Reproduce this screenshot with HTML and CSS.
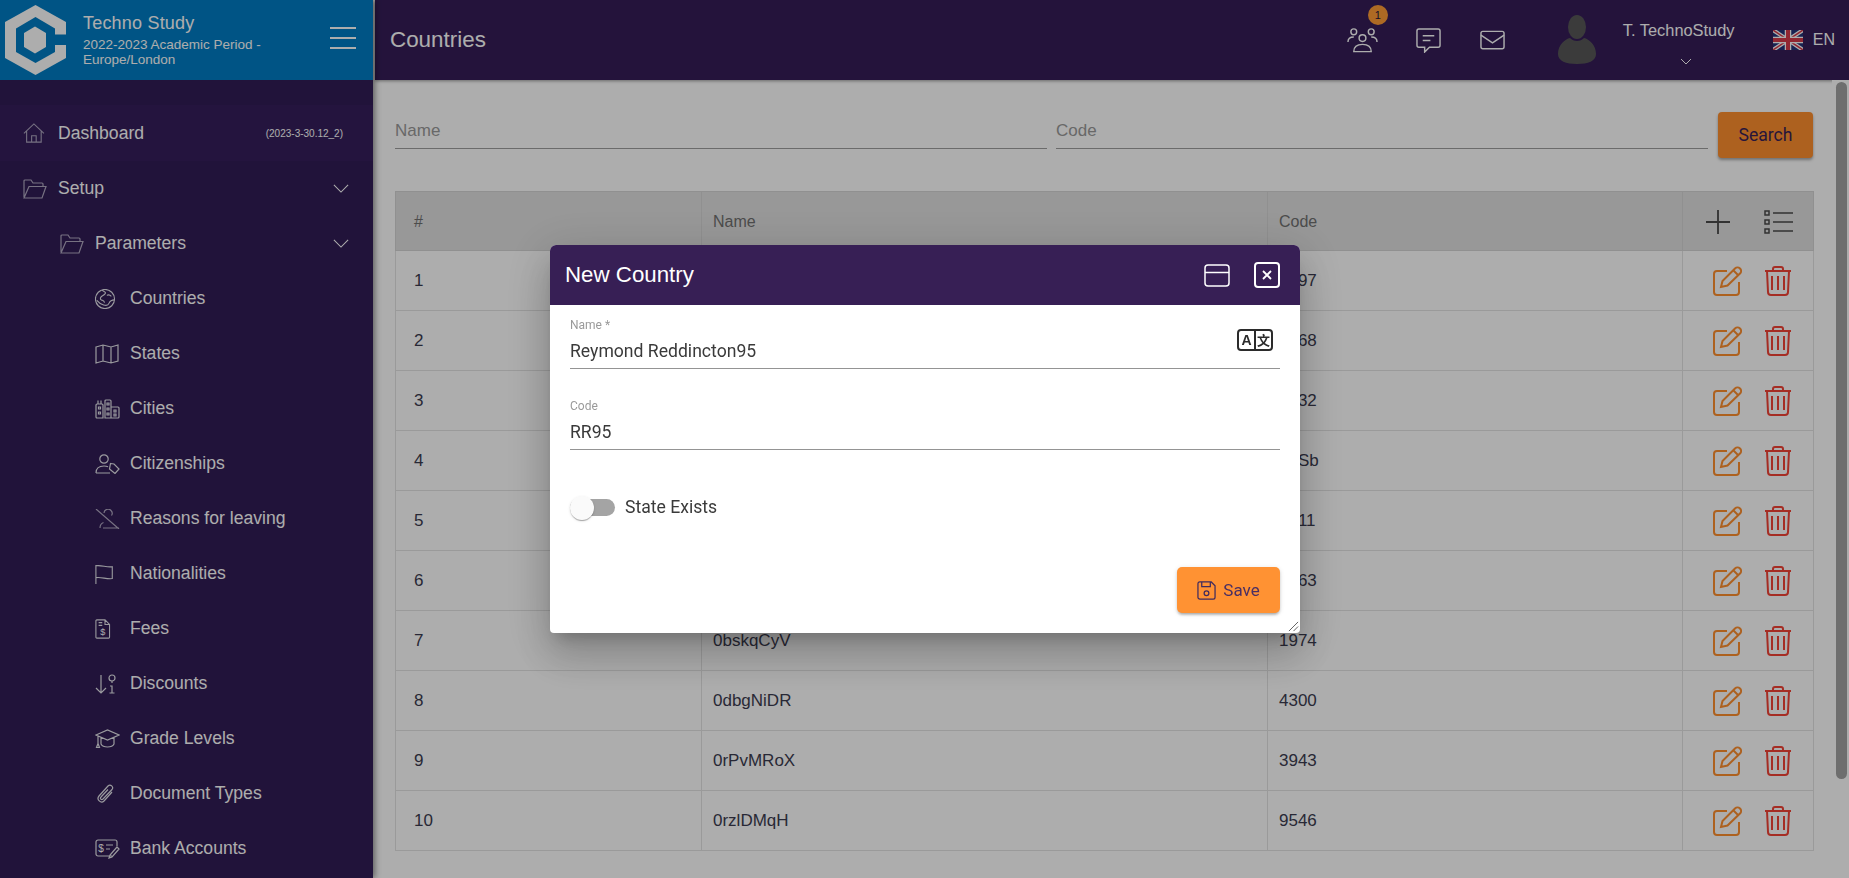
FILE: index.html
```html
<!DOCTYPE html>
<html lang="en">
<head>
  <meta charset="UTF-8" />
  <title>Countries</title>
  <link rel="stylesheet" href="styles.css">
</head>
<body>
  <div class="app">
    <aside class="sidebar">
      <div class="brand">
        <svg class="logo" viewBox="0 0 62 70">
          <path class="logo-light" d="M30.500 0 61 17V53L30.500 70 0 53V17Z"/>
          <path class="logo-blue" d="M30.500 12 50 23.500V47L30.500 58 11 47V23.500Z"/>
          <path class="logo-light" d="M30 21.500 41 28V42L30 48.500 19 42V28Z"/>
          <rect class="logo-blue" x="45" y="29.500" width="17" height="10.500"/>
        </svg>
        <div class="brand-text">
          <div class="brand-name">Techno Study</div>
          <div class="brand-period">2022-2023 Academic Period - Europe/London</div>
        </div>
        <div class="burger"><span></span><span></span><span></span></div>
      </div>
      <nav class="menu">
        <a class="item top active">
          <svg class="ico dim" viewBox="0 0 24 22" preserveAspectRatio="xMinYMid"><path d="M1 11.500 12 1l11 10.500M4 9v12h16V9M9.500 21v-7h5v7"/></svg>
          <span>Dashboard</span><small class="version">(2023-3-30.12_2)</small>
        </a>
        <a class="item top">
          <svg class="ico dim" viewBox="0 0 24 20" preserveAspectRatio="xMinYMid"><path d="M1 18V2a1 1 0 0 1 1-1h6l2 3h9a1 1 0 0 1 1 1v2M1 19h18L23 7.500H6L1 19z"/></svg>
          <span>Setup</span><svg class="chev" viewBox="0 0 18 10"><path d="M1 1l8 8 8-8"/></svg>
        </a>
        <a class="item sub">
          <svg class="ico dim" viewBox="0 0 24 20" preserveAspectRatio="xMinYMid"><path d="M1 18V2a1 1 0 0 1 1-1h6l2 3h9a1 1 0 0 1 1 1v2M1 19h18L23 7.500H6L1 19z"/></svg>
          <span>Parameters</span><svg class="chev" viewBox="0 0 18 10"><path d="M1 1l8 8 8-8"/></svg>
        </a>
        <a class="item leaf">
          <svg class="ico" viewBox="1 1 22 22" preserveAspectRatio="xMinYMid"><circle cx="12" cy="12" r="10.500"/><path d="M9 2c1 2 3 1.500 3.500 3S10 8 8.500 9 6 12 8 13s3 1 3.500 3M14 8c2-1 4 0 5 1M22.500 13c-2 0-5 1-6 3.500s-3 3-6 2-6-3-7.500-5"/></svg>
          <span>Countries</span>
        </a>
        <a class="item leaf">
          <svg class="ico" viewBox="0 0 24 20" preserveAspectRatio="xMinYMid"><path d="M1 3l7-2 8 2 7-2v16l-7 2-8-2-7 2zM8 1v16M16 3v16"/></svg>
          <span>States</span>
        </a>
        <a class="item leaf">
          <svg class="ico" viewBox="0 0 25 20" preserveAspectRatio="xMinYMid"><path d="M1 6a1 1 0 0 1 1-1h5a1 1 0 0 1 1 1v13H2a1 1 0 0 1-1-1zM3 5V1.500M6 5V1.500M10 19V2a1 1 0 0 1 1-1h4a1 1 0 0 1 1 1v17zM16 8h7a1 1 0 0 1 1 1v9a1 1 0 0 1-1 1h-7M3.500 8h2v2h-2zM3.500 13h2v2h-2zM12 4h2v2h-2zM12 9h2v2h-2zM12 14h2v2h-2zM19 11h2v2h-2zM19 15h2v2h-2z"/></svg>
          <span>Cities</span>
        </a>
        <a class="item leaf">
          <svg class="ico" viewBox="0 0 25 20" preserveAspectRatio="xMinYMid"><circle cx="9" cy="5" r="4.200"/><path d="M1 19c0-4.500 3-7 8-7 2 0 3 .3 4 .8M1 19h14"/><path d="M15.500 9.500l3.500 .5 5 5-4 4.500-5.500-4.500z"/></svg>
          <span>Citizenships</span>
        </a>
        <a class="item leaf">
          <svg class="ico dim" viewBox="0 0 25 20" preserveAspectRatio="xMinYMid"><path d="M1 0l23 20M5 19c0-3 1-4.500 3.500-5.500M8 19h16M9 4a4 4 0 0 1 7-2.500 4 4 0 0 1 .5 5"/></svg>
          <span>Reasons for leaving</span>
        </a>
        <a class="item leaf">
          <svg class="ico" viewBox="0 0 24 22" preserveAspectRatio="xMinYMid"><path d="M1 1v21M1 2c6-1 12 2 18 1V16c-6 1-12-2-18-1"/></svg>
          <span>Nationalities</span>
        </a>
        <a class="item leaf">
          <svg class="ico" viewBox="0 0 24 22" preserveAspectRatio="xMinYMid"><path d="M2 1h9l5 5v14a1 1 0 0 1-1 1H2a1 1 0 0 1-1-1V2a1 1 0 0 1 1-1zM11 1v5h5M4 4h4M4 7h4"/><text x="8.500" y="18" class="dollar">$</text></svg>
          <span>Fees</span>
        </a>
        <a class="item leaf">
          <svg class="ico" viewBox="0 0 21 20" preserveAspectRatio="xMinYMid"><path d="M6 1v18M1 14l5 5 5-5"/><circle cx="17" cy="4" r="3"/><path d="M17 7v2M15 12h2v7M14.500 19h5"/></svg>
          <span>Discounts</span>
        </a>
        <a class="item leaf">
          <svg class="ico" viewBox="0 0 25 20" preserveAspectRatio="xMinYMid"><path d="M1 6l11.500-5L24 6l-11.500 5zM6 8.500V15c2 4 11 4 13 0V8.500M3 7.500v7M3 14.500l-1.500 4h3z"/></svg>
          <span>Grade Levels</span>
        </a>
        <a class="item leaf">
          <svg class="ico" viewBox="0 0 20 20" preserveAspectRatio="xMinYMid"><path d="M17 8l-8 9c-3 3-8-1.500-5-5l9-10c2.500-2.500 6 1 4 3.500L8 15c-1.500 1.500-3.500-.5-2-2l7-7.500"/></svg>
          <span>Document Types</span>
        </a>
        <a class="item leaf">
          <svg class="ico" viewBox="0 0 25 20" preserveAspectRatio="xMinYMid"><path d="M17 17H3a2 2 0 0 1-2-2V3a2 2 0 0 1 2-2h17a2 2 0 0 1 2 2v4M11 6h7M11 10h4M24 10l-7 8-3 1 1-3 7-8z"/><text x="6" y="12.500" class="dollar">$</text></svg>
          <span>Bank Accounts</span>
        </a>
      </nav>
    </aside>

    <div class="page">
      <header class="topbar">
        <h1>Countries</h1>
        <div class="top-icons">
          <span class="top-icon">
            <svg class="ic-people" viewBox="0 0 32 26"><circle cx="7" cy="4.500" r="3"/><circle cx="25" cy="4.500" r="3"/><circle cx="16" cy="11" r="3.500"/><path d="M1 15c0-3 2-5 6-5M31 15c0-3-2-5-6-5M7 25c0-5 3-7.500 9-7.500s9 2.500 9 7.500z"/></svg>
            <b class="badge">1</b>
          </span>
          <span class="top-icon">
            <svg class="ic-chat" viewBox="0 0 26 26"><path d="M3 1h20a2 2 0 0 1 2 2v15a2 2 0 0 1-2 2H14l-5 5v-5H3a2 2 0 0 1-2-2V3a2 2 0 0 1 2-2zM7 8h12M7 13h8"/></svg>
          </span>
          <span class="top-icon mail-icon">
            <svg class="ic-mail" viewBox="0 0 26 20"><rect x="1" y="1" width="24" height="18" rx="2"/><path d="M1 5l12 8 12-8"/></svg>
          </span>
        </div>
        <svg class="avatar" viewBox="0 0 38 50"><ellipse cx="19" cy="12" rx="9" ry="12"/><path d="M0 39c0-9 7-15 12-16 2 2 4 3 7 3s5-1 7-3c5 1 12 7 12 16 0 7-8 10-19 10S0 46 0 39z"/></svg>
        <div class="user">
          <div>T. TechnoStudy</div>
          <svg class="user-chev" viewBox="0 0 12 7"><path d="M1 1l5 5 5-5"/></svg>
        </div>
        <svg class="flag" viewBox="0 0 60 40">
          <rect width="60" height="40" fill="#22337a"/>
          <path d="M0 0l60 40M60 0L0 40" stroke="#fff" stroke-width="8"/>
          <path d="M0 0l60 40M60 0L0 40" stroke="#d63a4b" stroke-width="3"/>
          <path d="M30 0v40M0 20h60" stroke="#fff" stroke-width="13"/>
          <path d="M30 0v40M0 20h60" stroke="#d63a4b" stroke-width="8"/>
        </svg>
        <span class="lang">EN</span>
      </header>

      <main class="content">
        <div class="filters">
          <label class="filter">Name</label>
          <label class="filter">Code</label>
          <button class="search">Search</button>
        </div>

        <table class="grid">
          <thead>
            <tr>
              <th class="c-num">#</th>
              <th class="c-name">Name</th>
              <th class="c-code">Code</th>
              <th class="c-act">
                <div class="acts">
                  <svg class="head-ico" viewBox="0 0 24 24"><path d="M12 0v24M0 12h24"/></svg>
                  <svg class="head-ico list" viewBox="0 0 29 24"><path d="M9 3h20M9 12h20M9 21h20"/><rect x="1" y="1" width="4" height="4"/><rect x="1" y="10" width="4" height="4"/><rect x="1" y="19" width="4" height="4"/></svg>
                </div>
              </th>
            </tr>
          </thead>
          <tbody id="rows"></tbody>
        </table>
      </main>
      <div class="scrollbar"><div class="thumb"></div></div>
    </div>
  </div>

  <div class="backdrop"></div>

  <section class="dialog">
    <div class="dialog-head">
      <h2>New Country</h2>
      <svg class="win" viewBox="0 0 26 23"><rect x="1" y="1" width="24" height="21" rx="3"/><path d="M1 8.500h24"/></svg>
      <span class="close"><svg viewBox="0 0 10 10"><path d="M1 1l8 8M9 1l-8 8"/></svg></span>
    </div>
    <div class="dialog-body">
      <div class="field">
        <div class="field-label">Name *</div>
        <div class="field-value">Reymond Reddincton95</div>
        <svg class="translate" viewBox="0 0 36 22">
          <rect x="1" y="1" width="34" height="20" rx="3"/>
          <path d="M18 1v20"/>
          <text x="9.500" y="16" class="tr-a">A</text>
          <text x="26.500" y="16" class="tr-b">文</text>
        </svg>
      </div>
      <div class="field">
        <div class="field-label">Code</div>
        <div class="field-value">RR95</div>
      </div>
      <div class="toggle-row">
        <span class="toggle"><i></i></span>
        <span>State Exists</span>
      </div>
      <div class="dialog-foot">
        <button class="save">
          <svg viewBox="0 0 20 20"><path d="M3 1h12l4 4v12a2 2 0 0 1-2 2H3a2 2 0 0 1-2-2V3a2 2 0 0 1 2-2zM5 1v5h9V1"/><circle cx="10" cy="13" r="2.500"/></svg>
          Save
        </button>
      </div>
    </div>
    <svg class="grip" viewBox="0 0 12 12"><path d="M1 11L11 1M6 11l5-5"/></svg>
  </section>

  <script>
    // names of rows 1-6 sit behind the dialog in the screen
    const data = [
      ["1", "", "1297"], ["2", "", "3168"], ["3", "", "4532"],
      ["4", "", "12Sb"], ["5", "", "6011"], ["6", "", "7263"],
      ["7", "0bskqCyV", "1974"], ["8", "0dbgNiDR", "4300"],
      ["9", "0rPvMRoX", "3943"], ["10", "0rzlDMqH", "9546"]
    ];
    const editIcon = '<svg class="row-ico edit" viewBox="0 0 29 30"><path d="M14 5H4a3 3 0 0 0-3 3v18a3 3 0 0 0 3 3h19a3 3 0 0 0 3-3V16"/><path d="M8 21l1.500-6L22 2.500c1.500-1.500 3.500-1.500 5 0s1.500 3.500 0 5L14.500 19.500z"/><path d="M20.500 4.500l5 5"/></svg>';
    const trashIcon = '<svg class="row-ico trash" viewBox="0 0 26 30"><path d="M0 5h26M8 5V3a2 2 0 0 1 2-2h6a2 2 0 0 1 2 2v2M2 5l1 21a3 3 0 0 0 3 3h14a3 3 0 0 0 3-3l1-21M7 10v14M13 10v14M19 10v14"/></svg>';
    const rows = document.getElementById("rows");
    data.forEach(r => {
      const tr = document.createElement("tr");
      tr.innerHTML = `<td>${r[0]}</td><td>${r[1]}</td><td>${r[2]}</td>
        <td><div class="acts">${editIcon}${trashIcon}</div></td>`;
      rows.appendChild(tr);
    });
  </script>
</body>
</html>
```

FILE: styles.css
```css
* {
  box-sizing: border-box;
}
html, body {
  height: 100%;
  margin: 0;
  overflow: hidden;
}
body {
  font-family: Roboto, "Liberation Sans", sans-serif;
  color: #2b2b2b;
  background: #fff;
}
.app {
  display: flex;
  height: 878px;
}

/* sidebar */
.sidebar {
  width: 373px;
  flex: none;
  background: #311c56;
  overflow: hidden;
  position: relative;
  z-index: 2;
  box-shadow: 2px 0 6px rgba(0,0,0,.45);
}
.brand {
  height: 80px;
  background: #007dc4;
  color: #fff;
  display: flex;
  align-items: center;
  padding: 0 17px 0 5px;
}
.logo {
  width: 62px;
  height: 70px;
  flex: none;
  margin-right: 16px;
}
.logo-light {
  fill: #fff;
}
.logo-blue {
  fill: #007dc4;
}
.brand-text {
  flex: 1;
  font-family: "Liberation Sans", sans-serif;
}
.brand-name {
  font-size: 18px;
  line-height: 20px;
  margin-bottom: 4px;
  letter-spacing: .2px;
}
.brand-period {
  font-size: 13.500px;
  line-height: 15px;
  width: 210px;
}
.burger {
  width: 26px;
  display: flex;
  flex-direction: column;
  gap: 8px;
  margin-bottom: 4px;
}
.burger span {
  height: 2px;
  background: #fff;
}
.menu {
  padding-top: 25px;
}
.item {
  height: 55px;
  display: flex;
  align-items: center;
  color: #fff;
  font-family: "Liberation Sans", sans-serif;
  font-size: 17.600px;
  white-space: nowrap;
}
.item.active {
  background: #351e5c;
  height: 56px;
}
.item.top {
  padding-left: 23px;
}
.item.sub {
  padding-left: 60px;
}
.item.leaf {
  padding-left: 95px;
}
.ico {
  width: 25px;
  height: 20px;
  margin-right: 10px;
  flex: none;
  fill: none;
  stroke: #e4e4ea;
  stroke-width: 1.200;
}
.ico.dim {
  stroke: #b0a8c0;
}
.dollar {
  font-size: 10px;
  font-family: "Liberation Sans", sans-serif;
  fill: #fff;
  stroke: none;
  text-anchor: middle;
}
.version {
  margin-left: auto;
  margin-right: 30px;
  font-size: 10px;
}
.chev {
  width: 16px;
  height: 9px;
  margin-left: auto;
  margin-right: 24px;
  fill: none;
  stroke: #fff;
  stroke-width: 1.200;
}

/* top bar */
.page {
  flex: 1;
  margin-left: 2px;
  position: relative;
  min-width: 0;
}
.topbar {
  height: 80px;
  background: #351d58;
  color: #fff;
  display: flex;
  align-items: center;
  padding-left: 15px;
  font-family: "Liberation Sans", sans-serif;
  position: relative;
  box-shadow: 0 1px 3px rgba(0,0,0,.4);
}
.topbar h1 {
  flex: 1;
  margin: 0;
  font-size: 22.400px;
  font-weight: 400;
}
.top-icons {
  display: flex;
  gap: 38px;
  align-items: center;
  margin-right: 52px;
}
.top-icon {
  position: relative;
  display: flex;
}
.mail-icon {
  margin-left: 1px;
}
.top-icon svg {
  fill: none;
  stroke: #fff;
  stroke-width: 1.500;
}
.ic-people {
  width: 31px;
  height: 26px;
}
.ic-chat {
  width: 25px;
  height: 25px;
}
.ic-mail {
  width: 25px;
  height: 20px;
}
.badge {
  position: absolute;
  top: -22px;
  left: 21px;
  width: 20px;
  height: 20px;
  border-radius: 50%;
  background: #ff9c36;
  color: #23143b;
  font-size: 11px;
  font-weight: 400;
  line-height: 20px;
  text-align: center;
}
.avatar {
  width: 40px;
  height: 50px;
  fill: #585858;
  flex: none;
  margin-right: 26px;
}
.user {
  width: 114px;
  font-size: 16.400px;
  white-space: nowrap;
  align-self: flex-start;
  padding-top: 21px;
  margin-right: 36px;
}
.user-chev {
  display: block;
  width: 12px;
  height: 7px;
  margin: 18px 0 0 57px;
  fill: none;
  stroke: #fff;
  stroke-width: 1;
}
.flag {
  width: 30px;
  height: 20px;
  flex: none;
  margin-right: 10px;
}
.lang {
  font-size: 16px;
  margin-right: 14px;
}

/* main */
.content {
  padding: 32px 0 0 20px;
  width: 1441px;
}
.filters {
  display: flex;
  align-items: flex-start;
  gap: 9px;
  height: 46px;
  margin-bottom: 33px;
}
.filter {
  flex: none;
  width: 652px;
  height: 37px;
  padding-top: 6px;
  border-bottom: 1px solid #9e9e9e;
  color: #9a9a9a;
  font-family: "Liberation Sans", sans-serif;
  font-size: 17px;
  line-height: 26px;
}
.filter + .filter {
  margin-right: 1px;
}
.search {
  width: 95px;
  height: 46px;
  border: none;
  border-radius: 4px;
  background: #ff8f2f;
  color: #3a1f57;
  font: 17.600px Roboto, sans-serif;
  box-shadow: 0 2px 3px rgba(0,0,0,.35);
}

/* table */
.grid {
  border-collapse: collapse;
  table-layout: fixed;
  width: 1419px;
  font-family: "Liberation Sans", sans-serif;
  font-size: 17px;
}
.grid th, .grid td {
  border: 1px solid #e3e3e3;
  padding: 0 0 0 11px;
  text-align: left;
  font-weight: 400;
}
.grid th:first-child, .grid td:first-child {
  padding-left: 18px;
}
.grid th {
  height: 59px;
  padding-top: 2px;
  background: #e0e0e0;
  border-color: #d4d4d4;
  color: #707070;
  font-size: 16px;
}
.grid td {
  height: 60px;
  background: #fff;
  color: #3c3c50;
}
.c-num {
  width: 306px;
}
.c-name {
  width: 566px;
}
.c-code {
  width: 415px;
}
.acts {
  display: flex;
  align-items: center;
  gap: 23px;
  padding-left: 19px;
}
.grid th .acts {
  gap: 34px;
  padding-left: 12px;
}
.head-ico {
  width: 24px;
  height: 24px;
  fill: none;
  stroke: #4a4a4a;
  stroke-width: 1.800;
}
.head-ico.list {
  width: 29px;
  stroke-width: 1.500;
}
.row-ico {
  height: 30px;
  fill: none;
  stroke-width: 2;
}
.row-ico.edit {
  width: 29px;
  stroke: #ff8f2f;
}
.row-ico.trash {
  width: 26px;
  stroke: #f44336;
}
.scrollbar {
  position: absolute;
  top: 80px;
  right: 0;
  bottom: 0;
  width: 17px;
  background: #fff;
}
.thumb {
  margin: 2px 2px 0 4px;
  height: 697px;
  border-radius: 6px;
  background: #a2a2a2;
}

/* dialog */
.backdrop {
  position: fixed;
  inset: 0;
  z-index: 5;
  background: rgba(0,0,0,.32);
}
.dialog {
  position: fixed;
  z-index: 6;
  left: 550px;
  top: 245px;
  width: 750px;
  height: 388px;
  background: #fff;
  border-radius: 6px 6px 4px 4px;
  box-shadow: 0 11px 15px -7px rgba(0,0,0,.2), 0 24px 38px 3px rgba(0,0,0,.14), 0 9px 46px 8px rgba(0,0,0,.12);
}
.dialog-head {
  height: 60px;
  background: #371f55;
  border-radius: 6px 6px 0 0;
  color: #fff;
  display: flex;
  align-items: center;
  padding: 0 20px 0 15px;
}
.dialog-head h2 {
  flex: 1;
  margin: 0;
  font-family: "Liberation Sans", sans-serif;
  font-size: 22.300px;
  font-weight: 400;
}
.win {
  width: 26px;
  height: 23px;
  fill: none;
  stroke: #fff;
  stroke-width: 1.500;
  margin-right: 24px;
}
.close {
  width: 26px;
  height: 26px;
  border: 2px solid #fff;
  border-radius: 4px;
  display: flex;
  align-items: center;
  justify-content: center;
}
.close svg {
  width: 10px;
  height: 10px;
  fill: none;
  stroke: #fff;
  stroke-width: 1.800;
}
.dialog-body {
  padding: 13px 20px 0;
}
.field {
  position: relative;
  height: 51px;
  border-bottom: 1px solid #949494;
  margin-bottom: 30px;
}
.field + .field {
  margin-bottom: 0;
}
.field-label {
  font-size: 12px;
  line-height: 14px;
  color: #9a9a9a;
}
.field-value {
  font-size: 17.600px;
  line-height: 20px;
  margin-top: 9px;
  color: #3a3a3a;
}
.translate {
  position: absolute;
  right: 7px;
  top: 11px;
  width: 36px;
  height: 22px;
  fill: none;
  stroke: #2b2b2b;
  stroke-width: 2;
}
.tr-a, .tr-b {
  fill: #2b2b2b;
  stroke: none;
  text-anchor: middle;
  font-size: 13px;
}
.tr-a {
  font-family: "Liberation Sans", sans-serif;
  font-weight: 700;
  font-size: 14px;
}
.tr-b {
  font-family: "Noto Sans CJK SC", sans-serif;
  font-weight: 700;
}
.toggle-row {
  display: flex;
  align-items: center;
  gap: 10px;
  margin-top: 45px;
  height: 24px;
  font-size: 17.600px;
  color: #3a3a3a;
}
.toggle {
  position: relative;
  width: 45px;
  height: 17px;
  border-radius: 9px;
  background: #a4a4a4;
  display: block;
}
.toggle i {
  position: absolute;
  left: 0;
  top: -3px;
  width: 24px;
  height: 24px;
  border-radius: 50%;
  background: #fafafa;
  box-shadow: 0 2px 1px -1px rgba(0,0,0,.2), 0 1px 1px rgba(0,0,0,.14), 0 1px 3px rgba(0,0,0,.12);
}
.dialog-foot {
  display: flex;
  justify-content: flex-end;
  margin-top: 48px;
}
.save {
  width: 103px;
  height: 46px;
  border: none;
  border-radius: 5px;
  background: #ff9233;
  color: #4a2f63;
  font: 17px Roboto, sans-serif;
  display: flex;
  align-items: center;
  justify-content: center;
  gap: 7px;
  box-shadow: 0 3px 3px -2px rgba(0,0,0,.2), 0 2px 3px rgba(0,0,0,.14), 0 1px 5px rgba(0,0,0,.12);
}
.save svg {
  width: 19px;
  height: 19px;
  fill: none;
  stroke: #3f2a5e;
  stroke-width: 1.300;
}
.grip {
  position: absolute;
  right: 1px;
  bottom: 1px;
  width: 11px;
  height: 11px;
  fill: none;
  stroke: #555;
  stroke-width: 1;
}
```
